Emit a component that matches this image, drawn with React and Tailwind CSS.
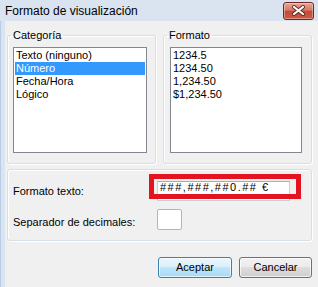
const categories = ["Texto (ninguno)", "Número", "Fecha/Hora", "Lógico"];
const formats = ["1234.5", "1234.50", "1,234.50", "$1,234.50"];

function Group({ label, className, children }) {
  return (
    <fieldset className="rounded-[3px] border border-[#d5dfe5] shadow-[inset_1px_1px_0_#fff,1px_1px_0_#fff]">
      {label && <legend className="ml-[3px] px-[2px] leading-[13px]">{label}</legend>}
      <div className={className}>{children}</div>
    </fieldset>
  );
}

function ListBox({ items, selected }) {
  return (
    <div className="mt-[5px] h-[106px] border border-[#828790] bg-white px-[1px] pt-[1px]">
      {items.map((item) => (
        <div
          key={item}
          className={`h-[13px] px-[1px] leading-[13px] ${item === selected ? "bg-[#3399ff] text-white" : ""}`}
        >
          {item}
        </div>
      ))}
    </div>
  );
}

function CloseButton() {
  return (
    <button className="mt-[2px] h-[18px] w-[31px] self-start rounded-[3px] border border-[#6e2a22] bg-[linear-gradient(#e8a597,#d47866_45%,#c24b39_52%,#cd5a44)] shadow-[inset_0_0_0_1px_rgba(255,255,255,0.35)]">
      <svg width="29" height="16" viewBox="0 0 29 16" className="block">
        <path d="M10 4 L19 11 M19 4 L10 11" stroke="#5a2a24" strokeWidth="4" strokeLinecap="round" />
        <path d="M10 4 L19 11 M19 4 L10 11" stroke="#fff" strokeWidth="2.2" strokeLinecap="round" />
      </svg>
    </button>
  );
}

export default function App() {
  return (
    <div className="flex h-[287px] w-[318px] flex-col overflow-hidden bg-[#dae4f0] font-['Liberation_Sans',Arial,sans-serif] text-[11px] text-black">
      <div className="flex h-[21px] flex-none items-start justify-between pl-[5px] pr-[4px]">
        <span className="pt-[4px] text-[12px] leading-[14px] text-black">Formato de visualización</span>
        <CloseButton />
      </div>

      <div className="flex flex-1">
        <div className="w-[5px] flex-none border-l border-[#b9cde5]" />
        <div className="flex-1 bg-[#f0f0f0] pl-[2px]">
          <div className="flex w-[305px] flex-col">
            <div className="mt-[8px] flex gap-[7px]">
              <div className="w-[149px]">
                <Group label="Categoría" className="pb-[10px] pl-[5px] pr-[8px]">
                  <ListBox items={categories} selected="Número" />
                </Group>
              </div>
              <div className="w-[149px]">
                <Group label="Formato" className="pb-[10px] pl-[6px] pr-[9px]">
                  <ListBox items={formats} />
                </Group>
              </div>
            </div>

            <div className="mt-[5px]">
              <Group className="pb-[10px] pl-[5px] pt-[11px]">
                <div className="grid grid-cols-[144px_auto] items-center gap-y-[8px]">
                  <span className="leading-[13px]">Formato texto:</span>
                  <div className="relative h-[20px] w-[133px] border border-[#c9ced6] border-t-[#abadb3] bg-white pl-[2px]">
                    <span className="-mt-[1px] block text-[11px] leading-[13px] tracking-[1.5px]">###,###,##0.## €</span>
                    <div className="absolute -left-[9px] -top-[8px] h-[25px] w-[152px] border-[5px] border-[#e3141f]" />
                  </div>

                  <span className="pt-[6px] leading-[13px]">Separador de decimales:</span>
                  <div className="h-[21px] w-[25px] rounded-[2px] border border-[#aab6c6] bg-white" />
                </div>
              </Group>
            </div>

            <div className="mt-[16px] flex justify-end gap-[7px]">
              <button className="h-[21px] w-[74px] rounded-[3px] border border-[#3c7fb1] bg-[linear-gradient(#eaf6fd,#d9f0fc_50%,#bee6fd_50%,#a7d9f5)] leading-[19px] shadow-[inset_0_0_0_1px_rgba(255,255,255,0.7)]">
                Aceptar
              </button>
              <button className="h-[21px] w-[73px] rounded-[3px] border border-[#707070] bg-[linear-gradient(#f2f2f2,#ebebeb_50%,#dddddd_50%,#cfcfcf)] leading-[19px] shadow-[inset_0_0_0_1px_rgba(255,255,255,0.7)]">
                Cancelar
              </button>
            </div>
          </div>
        </div>
      </div>
    </div>
  );
}
